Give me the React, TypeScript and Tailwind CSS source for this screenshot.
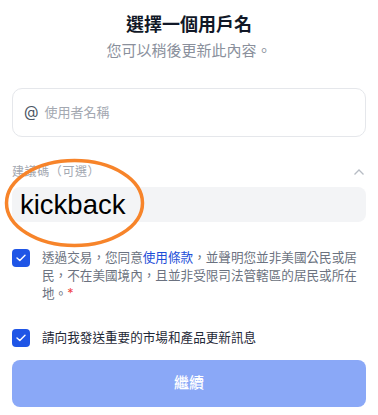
export default function App() {
  return (
    <div className="relative h-[415px] w-[378px] overflow-hidden bg-white px-3 font-['Inter','Noto_Sans_CJK_TC',sans-serif]">
      <div className="pt-[12px] text-center">
        <h1 className="text-[18px] font-bold leading-[26px] text-[#111827]">選擇一個用戶名</h1>
        <p className="mt-[2px] text-[15px] leading-[22px] text-[#8a909c]">您可以稍後更新此內容。</p>
      </div>

      <div className="mt-[26px] flex h-[49px] items-center gap-[6px] rounded-[10px] border border-[#e5e7eb] px-[11px]">
        <span className="text-[15px] text-[#4b5563]">@</span>
        <span className="text-[13px] text-[#a3a8b1]">使用者名稱</span>
      </div>

      <div className="mt-[26px] flex items-center justify-between">
        <span className="text-[12px] leading-[18px] tracking-[0.6px] text-[#a3a8b1]">建議碼（可選）</span>
        <svg width="12" height="8" viewBox="0 0 12 8" className="mr-[1px]">
          <path d="M1.5 6.5 L6 2 L10.5 6.5" fill="none" stroke="#b7bcc4" strokeWidth="1.3" />
        </svg>
      </div>

      <div className="mt-[6px] flex h-[35px] items-center rounded-[8px] bg-[#f3f4f6] pl-[8px]">
        <span className="font-['Liberation_Sans',sans-serif] text-[27.5px] leading-none text-black">kickback</span>
      </div>

      <div className="mt-[27px] flex items-start gap-[12px]">
        <Check />
        <p className="text-[12.6px] leading-[18px] text-[#6b7280]">
          透過交易，您同意<span className="text-[#1d4ed8]">使用條款</span>，並聲明您並非美國公民或居民，不在美國境內，且並非受限司法管轄區的居民或所在地。<span className="text-[#ef4444]">*</span>
        </p>
      </div>

      <div className="mt-[26px] flex items-center gap-[12px]">
        <Check />
        <span className="text-[12.6px] leading-[18px] text-[#1f2937]">請向我發送重要的市場和產品更新訊息</span>
      </div>

      <button className="mt-[13px] flex h-[47px] w-full items-center justify-center rounded-[8px] bg-[#8aa8f7] text-[15px] font-medium text-white">
        繼續
      </button>

      <svg
        className="pointer-events-none absolute left-[4px] top-[158px]"
        width="141"
        height="90"
        viewBox="0 0 141 90"
      >
        <ellipse cx="70.5" cy="45" rx="68" ry="42.5" fill="none" stroke="#f7842a" strokeWidth="3.5" />
      </svg>
    </div>
  );
}

function Check() {
  return (
    <span className="flex h-[18px] w-[18px] shrink-0 items-center justify-center rounded-[4px] bg-[#1f55e6]">
      <svg width="10" height="8" viewBox="0 0 10 8">
        <path d="M1 4 L3.8 6.6 L9 1.3" fill="none" stroke="white" strokeWidth="1.4" strokeLinecap="round" strokeLinejoin="round" />
      </svg>
    </span>
  );
}
